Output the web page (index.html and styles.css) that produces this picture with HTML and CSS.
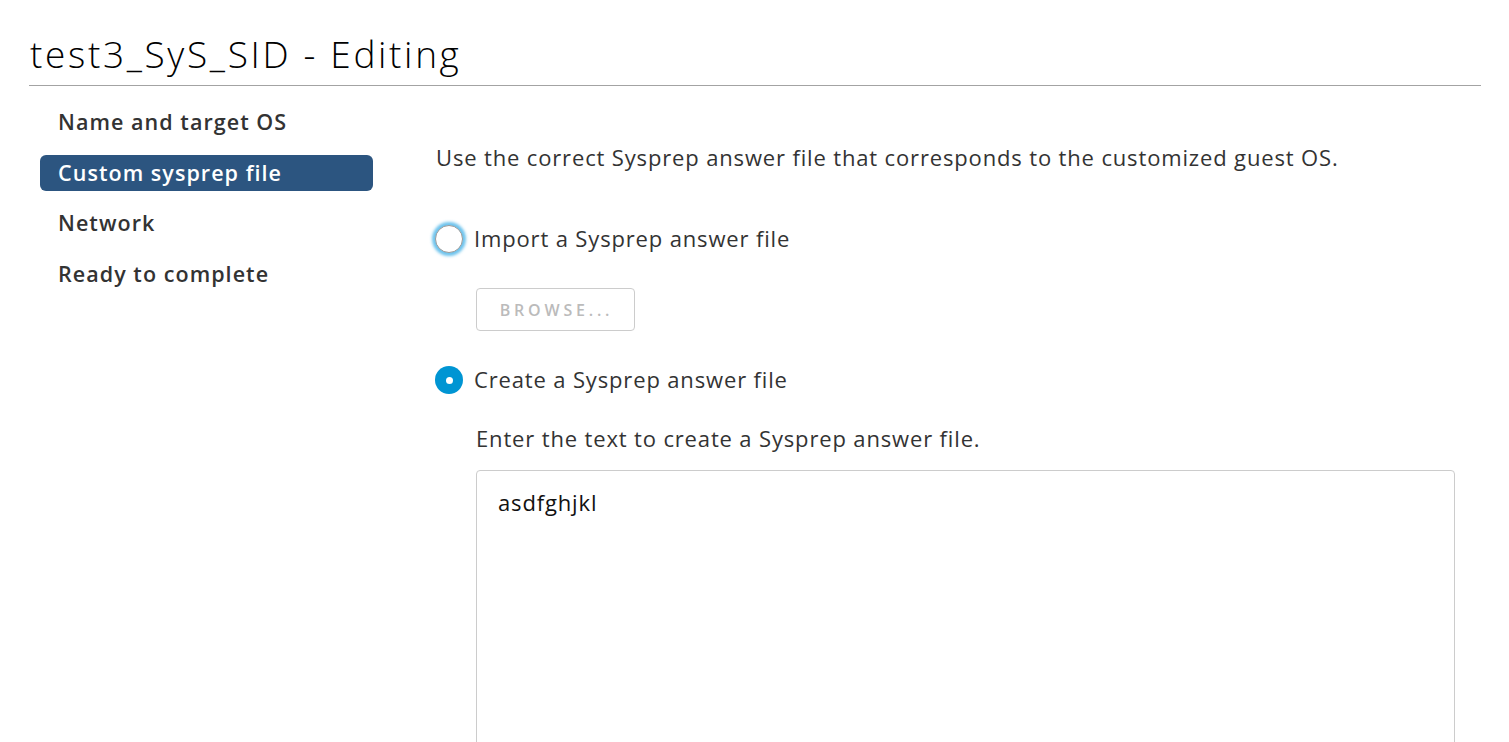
FILE: index.html
```html
<!DOCTYPE html>
<html lang="en">
<head>
<meta charset="utf-8">
<title>test3_SyS_SID - Editing</title>
<link rel="stylesheet" href="styles.css">
</head>
<body>
<header class="header">
  <h1 class="title">test3_SyS_SID - Editing</h1>
</header>
<main class="main">
  <nav class="steps">
    <div class="step">Name and target OS</div>
    <div class="step step-active">Custom sysprep file</div>
    <div class="step">Network</div>
    <div class="step">Ready to complete</div>
  </nav>
  <section class="content">
    <p class="desc">Use the correct Sysprep answer file that corresponds to the customized guest OS.</p>
    <label class="radio-row radio-row-first">
      <span class="radio radio-focus"></span>
      <span class="radio-label">Import a Sysprep answer file</span>
    </label>
    <button class="browse" type="button" disabled>BROWSE...</button>
    <label class="radio-row radio-row-second">
      <span class="radio radio-checked"></span>
      <span class="radio-label">Create a Sysprep answer file</span>
    </label>
    <p class="hint">Enter the text to create a Sysprep answer file.</p>
    <div class="textarea">asdfghjkl</div>
  </section>
</main>
</body>
</html>
```
FILE: styles.css
```css
html, body {
  margin: 0;
  padding: 0;
  background: #ffffff;
  overflow: hidden;
}
body {
  font-family: "Open Sans", "Liberation Sans", sans-serif;
  color: #333333;
  height: 742px;
}
.header {
  margin: 0 28px 0 29px;
  padding-top: 32px;
  padding-bottom: 9px;
  border-bottom: 1px solid #a3a3a3;
}
.title {
  margin: 0 0 0 1px;
  font-size: 37px;
  line-height: 44px;
  font-weight: 300;
  letter-spacing: 2.65px;
  color: #000000;
}
.main {
  display: flex;
  padding-top: 18px;
}
.steps {
  width: 333px;
  margin-left: 40px;
  display: flex;
  flex-direction: column;
  gap: 14.67px;
  flex-shrink: 0;
}
.step {
  height: 36px;
  line-height: 36px;
  padding-left: 18px;
  font-size: 21.5px;
  font-weight: 600;
  letter-spacing: 1.05px;
  color: #333333;
  border-radius: 6px;
}
.step-active {
  background: #2c5580;
  color: #ffffff;
}
.content {
  margin-left: 62px;
  width: 1020px;
}
.desc {
  margin: 39px 0 0 1px;
  font-size: 22px;
  line-height: 28px;
  letter-spacing: 0.85px;
}
.radio-row {
  display: flex;
  align-items: center;
  height: 28px;
  gap: 11px;
}
.radio-row-first {
  margin-top: 54px;
}
.radio-row-second {
  margin-top: 35px;
}
.radio {
  width: 28px;
  height: 28px;
  box-sizing: border-box;
  border-radius: 50%;
  background: #ffffff;
  border: 1px solid #9a9a9a;
  flex-shrink: 0;
  position: relative;
}
.radio-focus {
  box-shadow: 0 0 3px 3px rgba(84, 184, 234, 0.85);
}
.radio-checked {
  border: none;
  background: #0095d3;
}
.radio-checked::after {
  content: "";
  position: absolute;
  width: 7px;
  height: 7px;
  border-radius: 50%;
  background: #ffffff;
  left: 10.5px;
  top: 10.5px;
}
.radio-label {
  font-size: 22px;
  line-height: 28px;
  padding-bottom: 2px;
  letter-spacing: 0.85px;
  color: #333333;
}
.browse {
  display: block;
  margin: 35px 0 0 41px;
  width: 159px;
  height: 43px;
  box-sizing: border-box;
  border: 1px solid #cccccc;
  border-radius: 4px;
  background: #ffffff;
  font-family: inherit;
  font-size: 16px;
  font-weight: 600;
  letter-spacing: 3.8px;
  color: #bbbbbb;
  padding: 0 0 0 2px;
}
.hint {
  margin: 30px 0 0 41px;
  font-size: 22px;
  line-height: 28px;
  letter-spacing: 0.85px;
}
.textarea {
  margin: 18px 0 0 41px;
  width: 979px;
  height: 400px;
  box-sizing: border-box;
  border: 1px solid #cccccc;
  border-radius: 4px;
  padding: 17px 21px;
  font-size: 22px;
  line-height: 28px;
  letter-spacing: 0.85px;
  color: #111111;
}
```
